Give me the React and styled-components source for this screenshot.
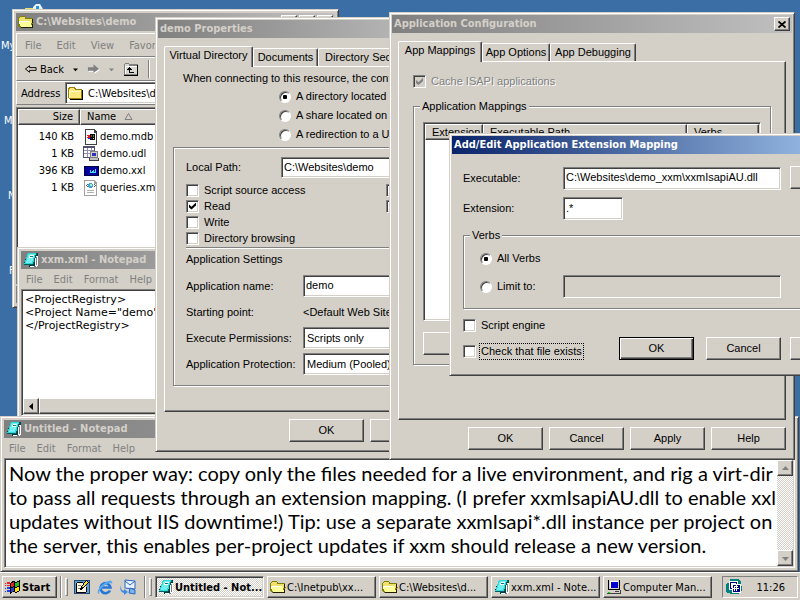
import React from "react";
import styled, { createGlobalStyle, css } from "styled-components";

const face = "#d4d0c8";
const ui = `"Liberation Sans", Arial, sans-serif`;
const tahoma = `"DejaVu Sans Condensed", "DejaVu Sans", sans-serif`;

const raised = css`
  border: 1px solid;
  border-color: #fff #404040 #404040 #fff;
  box-shadow: inset -1px -1px 0 #808080;
`;
const sunken = css`
  border: 1px solid;
  border-color: #808080 #fff #fff #808080;
  box-shadow: inset 1px 1px 0 #404040, inset -1px -1px 0 #d4d0c8;
`;
const etched = css`
  border: 1px solid #808080;
  box-shadow: 1px 1px 0 #fff, inset 1px 1px 0 #fff;
`;

const GlobalStyle = createGlobalStyle`
  *, *::before, *::after { box-sizing: border-box; }
  body { margin: 0; overflow: hidden; font: 11px/13px ${ui}; color: #000; background: #3a6ea5; }
  button, input, select, textarea { font: inherit; color: inherit; margin: 0; border-radius: 0; outline: none; }
`;

const Screen = styled.div`
  display: flex;
  flex-direction: column;
  height: 100vh;
`;
const Desktop = styled.main`
  position: relative;
  flex: 1;
  min-height: 0;
  overflow: hidden;
  background: #3a6ea5;
`;
const Shortcut = styled.span`
  position: absolute;
  left: ${(p) => p.$x}px;
  top: ${(p) => p.$y}px;
  color: #fff;
  font-family: ${tahoma};
`;

const Window = styled.section`
  position: absolute;
  left: ${(p) => p.$x}px;
  top: ${(p) => p.$y}px;
  width: ${(p) => p.$w};
  padding: ${(p) => (p.$sizable ? 3 : 2)}px;
  display: flex;
  flex-direction: column;
  background: ${face};
  border: 1px solid;
  border-color: #d4d0c8 #404040 #404040 #d4d0c8;
  box-shadow: inset 1px 1px 0 #fff, inset -1px -1px 0 #808080;
`;
const TitleBar = styled.header`
  display: flex;
  align-items: center;
  height: 18px;
  padding: 0 2px;
  gap: 2px;
  font: bold 11px/18px ${tahoma};
  white-space: nowrap;
  color: ${(p) => (p.$active ? "#fff" : face)};
  background: ${(p) =>
    p.$active
      ? "linear-gradient(90deg, #0a246a, #a6caf0)"
      : "linear-gradient(90deg, #808080, #c0c0c0)"};
`;
const TitleText = styled.span`
  flex: 1;
`;
const CaptionButton = styled.button`
  ${raised}
  display: grid;
  place-items: center;
  width: 16px;
  height: 14px;
  padding: 0;
  background: ${face};
`;
const MenuBar = styled.nav`
  display: flex;
  align-items: center;
  gap: ${(p) => p.$gap}px;
  height: ${(p) => p.$h}px;
  padding: 0 ${(p) => p.$pad}px;
`;
const MenuItem = styled.button`
  padding: 0;
  border: 0;
  background: none;
  color: #808080;
  font-family: ${tahoma};
`;
const Band = styled.div`
  display: flex;
  align-items: center;
  height: 24px;
  gap: ${(p) => p.$gap || 0}px;
  padding: 0 0 0 ${(p) => p.$pad || 0}px;
  border-top: 1px solid #fff;
  border-left: 1px solid #fff;
  border-bottom: 1px solid #808080;
  font-family: ${tahoma};
`;
const Bands = styled.div`
  display: flex;
  flex-direction: column;
  padding: 2px 0;
`;
const ToolButton = styled.button`
  display: flex;
  align-items: center;
  gap: 3px;
  padding: 0;
  border: 0;
  background: none;
`;
const Divider = styled.span`
  width: 2px;
  height: ${(p) => p.$h || 22}px;
  border-left: 1px solid #808080;
  border-right: 1px solid #fff;
`;
const AddressLabel = styled.label`
  width: 44px;
`;
const AddressBox = styled.div`
  ${sunken}
  flex: 1;
  display: flex;
  align-items: center;
  height: 22px;
  padding: 0 2px;
  gap: 4px;
  background: #fff;
`;
const AddressInput = styled.input`
  flex: 1;
  min-width: 0;
  padding: 0;
  border: 0;
  background: none;
`;
const FilePane = styled.div`
  ${sunken}
  height: 178px;
  padding: 1px;
  background: #fff;
`;
const FileTable = styled.table`
  width: 100%;
  border-collapse: separate;
  border-spacing: 0;
  table-layout: fixed;
  font-family: ${tahoma};
`;
const HeadCell = styled.th`
  ${raised}
  width: ${(p) => p.$w || "auto"};
  height: 16px;
  padding: 0 6px;
  background: ${face};
  font-weight: normal;
  text-align: ${(p) => (p.$right ? "right" : "left")};
  line-height: 14px;
`;
const SortMark = styled.svg`
  margin-left: 8px;
`;
const SpacerRow = styled.tr`
  height: 3px;
`;
const SizeCell = styled.td`
  height: 17px;
  padding: 0 6px 0 0;
  text-align: right;
`;
const NameCell = styled.td`
  padding: 0 0 0 3px;
`;
const FileName = styled.span`
  display: flex;
  align-items: center;
  gap: 1px;
  height: 17px;
`;
const StatusBar = styled.footer`
  height: 18px;
  margin-top: 1px;
  border: 1px solid;
  border-color: #808080 #fff #fff #808080;
`;

const EditorFrame = styled.div`
  ${sunken}
  display: grid;
  grid-template-columns: 1fr ${(p) => (p.$side ? "16px" : "")};
  padding: 1px;
  background: #fff;
`;
const Editor = styled.textarea`
  display: block;
  width: 100%;
  height: ${(p) => p.$h}px;
  padding: ${(p) => (p.$large ? "1px 0 0 3px" : "2px 0 0 2px")};
  border: 0;
  resize: none;
  overflow: hidden;
  white-space: pre;
  background: #fff;
  font: ${(p) =>
    p.$large ? `20px/24px Lato, "Open Sans", sans-serif` : `11px/13px "DejaVu Sans", sans-serif`};
`;
const checker = "repeating-conic-gradient(#fff 0 25%, #d4d0c8 0 50%) 0 0 / 2px 2px";
const ScrollTrack = styled.div`
  display: flex;
  flex-direction: ${(p) => (p.$across ? "row" : "column")};
  justify-content: space-between;
  background: ${checker};
`;
const ScrollButton = styled.button`
  ${raised}
  display: grid;
  place-items: center;
  width: 16px;
  height: 16px;
  padding: 0;
  background: ${face};
`;
const ScrollThumb = styled.div`
  ${raised}
  flex: 1;
  background: ${face};
`;

const DialogBody = styled.div`
  display: flex;
  flex-direction: column;
  padding: 8px 6px 7px;
`;
const TabStrip = styled.div`
  display: flex;
  align-items: flex-end;
  height: 20px;
`;
const Tab = styled.button`
  position: relative;
  height: 18px;
  width: ${(p) => p.$w}px;
  padding: 0;
  border: 1px solid;
  border-color: #fff #404040 transparent #fff;
  border-bottom: 0;
  border-radius: 2px 2px 0 0;
  box-shadow: inset -1px 0 0 #808080;
  background: ${face};
  white-space: nowrap;
  ${(p) =>
    p.$selected &&
    css`
      z-index: 1;
      height: 21px;
      margin-bottom: -1px;
      padding-bottom: 3px;
    `}
`;
const TabPane = styled.div`
  ${raised}
  display: flex;
  flex-direction: column;
  height: ${(p) => p.$h}px;
  padding: ${(p) => p.$pad};
`;
const ButtonRow = styled.div`
  display: flex;
  justify-content: flex-end;
  gap: ${(p) => p.$gap || 6}px;
  margin-top: ${(p) => p.$top || 0}px;
`;
const Button = styled.button`
  ${raised}
  width: ${(p) => p.$w || "75px"};
  height: 23px;
  padding: 0 0 1px;
  background: ${face};
  ${(p) =>
    p.$default &&
    css`
      border-color: #000;
      box-shadow: inset 1px 1px 0 #fff, inset -1px -1px 0 #404040, inset -2px -2px 0 #808080;
    `}
`;
const Field = styled.input`
  ${sunken}
  width: ${(p) => p.$w || "100%"};
  height: ${(p) => p.$h || 23}px;
  padding: 0 2px 2px;
  background: ${(p) => (p.disabled ? face : "#fff")};
`;
const DropDown = styled.select`
  ${sunken}
  appearance: none;
  width: 100%;
  height: 22px;
  padding: 0 3px;
  background: #fff;
`;
const Choice = styled.label`
  display: flex;
  align-items: center;
  gap: 5px;
  height: ${(p) => p.$h || 13}px;
  white-space: nowrap;
  ${(p) => p.$dim && css`color: #808080; text-shadow: 1px 1px 0 #fff;`}
`;
const FocusRing = styled.span`
  outline: 1px dotted #000;
  outline-offset: 1px;
`;
const Check = styled.input.attrs({ type: "checkbox" })`
  ${sunken}
  appearance: none;
  display: grid;
  place-items: center;
  flex: none;
  width: 13px;
  height: 13px;
  background: ${(p) => (p.disabled ? face : "#fff")};
  &:checked::before {
    content: "";
    width: 7px;
    height: 7px;
    background: ${(p) => (p.disabled ? "#808080" : "#000")};
    clip-path: polygon(0 28%, 36% 60%, 100% 0, 100% 42%, 36% 100%, 0 70%);
  }
`;
const Radio = styled.input.attrs({ type: "radio" })`
  appearance: none;
  display: grid;
  place-items: center;
  flex: none;
  width: 12px;
  height: 12px;
  border: 1px solid;
  border-color: #808080 #fff #fff #808080;
  border-radius: 50%;
  box-shadow: inset 1px 1px 0 #404040;
  background: #fff;
  &:checked::before {
    content: "";
    width: 4px;
    height: 4px;
    border-radius: 1px;
    background: #000;
  }
`;
const Group = styled.fieldset`
  ${etched}
  min-width: 0;
  margin: ${(p) => p.$margin};
  padding: ${(p) => p.$pad};
`;
const Legend = styled.legend`
  height: 13px;
  margin-left: ${(p) => p.$in || 0}px;
  padding: 0 2px;
  background: ${face};
`;
const Intro = styled.p`
  margin: 0 0 2px 10px;
  white-space: nowrap;
`;
const RadioList = styled.div`
  display: flex;
  flex-direction: column;
  margin-left: 106px;
`;
const SettingsBox = styled.div`
  ${etched}
  margin-top: 3px;
  padding: 9px 12px 8px;
`;
const FormRow = styled.div`
  display: grid;
  grid-template-columns: ${(p) => p.$cols};
  align-items: center;
  height: ${(p) => p.$h}px;
  white-space: nowrap;
`;
const CheckGrid = styled.div`
  display: grid;
  grid-template-columns: 200px 1fr;
  margin-top: 4px;
`;
const Rule = styled.hr`
  width: 100%;
  height: 2px;
  margin: 1px 0 0;
  border: 0;
  border-top: 1px solid #808080;
  border-bottom: 1px solid #fff;
`;
const SectionTitle = styled.h3`
  margin: 0 0 4px;
  font: 11px/20px ${ui};
`;
const MapList = styled.div`
  ${sunken}
  height: 199px;
  padding: 1px;
  background: #fff;
`;
const MapTable = styled(FileTable)`
  font-family: ${ui};
`;
const MappingBody = styled.div`
  display: flex;
  flex-direction: column;
  padding: 12px 11px 13px;
`;
const MappingRow = styled.div`
  display: grid;
  grid-template-columns: 100px 218px 57px;
  align-items: center;
  margin-bottom: 7px;
`;
const OuterButton = styled.div`
  padding-left: 9px;
`;
const VerbGrid = styled.div`
  display: grid;
  grid-template-columns: 83px 218px;
  align-items: center;
  row-gap: 10px;
`;
const VerbSpan = styled.div`
  grid-column: 1 / -1;
`;
const MappingFooter = styled.div`
  display: flex;
  align-items: flex-end;
  gap: 9px;
  margin-top: 10px;
`;
const FooterMain = styled.div`
  display: flex;
  justify-content: space-between;
  align-items: flex-end;
  width: 318px;
`;
const CheckStack = styled.div`
  display: flex;
  flex-direction: column;
  gap: 13px;
  padding-bottom: 2px;
`;

const Taskbar = styled.footer`
  display: flex;
  align-items: center;
  gap: 3px;
  height: 28px;
  padding: 2px 2px 0;
  background: ${face};
  box-shadow: inset 0 1px 0 #fff;
`;
const TaskButton = styled.button`
  ${raised}
  flex: 1;
  min-width: 0;
  display: flex;
  align-items: center;
  gap: 1px;
  height: 22px;
  padding: 0 2px;
  background: ${face};
  font-family: ${tahoma};
  white-space: nowrap;
  ${(p) =>
    p.$active &&
    css`
      ${sunken}
      background: ${checker};
      font-weight: bold;
    `}
`;
const StartButton = styled(TaskButton)`
  flex: none;
  width: 55px;
  font-weight: bold;
`;
const Grip = styled.span`
  width: 3px;
  height: 18px;
  border: 1px solid;
  border-color: #fff #808080 #808080 #fff;
`;
const QuickLaunch = styled.div`
  display: flex;
  gap: 7px;
  width: 70px;
  padding-left: 3px;
`;
const QuickButton = styled.button`
  padding: 0;
  border: 0;
  background: none;
  display: grid;
`;
const TaskList = styled.div`
  flex: 1;
  min-width: 0;
  display: flex;
  gap: 3px;
  padding-right: 7px;
`;
const Tray = styled.div`
  display: flex;
  align-items: center;
  justify-content: space-between;
  width: 76px;
  height: 22px;
  padding: 0 12px 0 3px;
  border: 1px solid;
  border-color: #808080 #fff #fff #808080;
  font-family: ${tahoma};
`;
const Svg = styled.svg.attrs({ viewBox: "0 0 16 16", shapeRendering: "crispEdges", "aria-hidden": true })`
  flex: none;
  display: block;
  width: 16px;
  height: 16px;
`;
const SmoothSvg = styled.svg.attrs({ viewBox: "0 0 16 16", "aria-hidden": true })`
  display: block;
  width: 16px;
  height: 16px;
`;

const OpenFolder = () => (
  <Svg>
    <path d="M0 4h1V3h1V2h5v1h1v1h7v4h1l-2 6H3L0 12z" fill="#808000" />
    <path d="M2 3h5v2h7v4H1V4z" fill="#f0e070" />
    <path d="M1 7h11v1h1l1 5H3L1 9z" fill="#ffff9c" />
    <path d="M1 7h10v1H2v2H1z" fill="#fff" />
    <path d="M3 13h11v-3h1v4H3zM14 5h1v4h-1z" fill="#202000" />
  </Svg>
);
const Folder = () => (
  <Svg>
    <path d="M0 3l1-1h5l2 2h6v10H1l-1-1z" fill="#a08000" />
    <path d="M1 4l1-1h4l1 2h6v8H1z" fill="#ffe880" />
    <path d="M1 6h12v1H2v6H1z" fill="#fff8c8" />
    <path d="M15 5v10H2v-1h12V5z" fill="#000" />
  </Svg>
);
const NotepadIcon = () => (
  <Svg>
    <path d="M5 1h10v11l-2 3H6v-2H1v-2z" fill="#004040" />
    <path d="M12 4h3v9l-2 2H7v-1h5z" fill="#fff" />
    <path d="M13 5v8M11 14h2" stroke="#808080" fill="none" />
    <path d="M5 1h8l-3 11H1z" fill="#30d8d8" />
    <path d="M6 2h6L9 11H3z" fill="#70f0f0" />
    <path d="M7 3h4l-1 3H6z" fill="#fff" />
    <path d="M7 4h3v1H7z" fill="#008080" />
    <path d="M1 12h9v1H1zM13 1h1l-3 11h-1z" fill="#006060" />
  </Svg>
);
const WinFlag = () => (
  <Svg>
    <path d="M5 4l3-2 3 1 4-2v11l-4 2-3-1-3 2z" fill="#000" />
    <path d="M6 4l3-1v4l-3 1z" fill="#f02020" />
    <path d="M10 4l4-1v4l-4 1z" fill="#20c020" />
    <path d="M6 9l3-1v4l-3 1z" fill="#2040e0" />
    <path d="M10 9l4-1v4l-4 1z" fill="#ffe000" />
    <path d="M0 4h1v1H0zM2 3h3v2H2zM0 6h1v1H0zM2 6h3v1H2z" fill="#f02020" />
    <path d="M0 9h1v1H0zM2 8h3v2H2zM0 12h1v1H0zM2 11h3v2H2z" fill="#2040e0" />
  </Svg>
);
const MdbIcon = () => (
  <Svg>
    <path d="M2 0h9l3 3v13H2z" fill="#404040" />
    <path d="M3 1h8v3h2v11H3z" fill="#fff" />
    <path d="M4 6h1v1H4zM4 8h1v1H4zM5 6h2v3H5z" fill="#e02020" />
    <path d="M7 5h5v6H7z" fill="#000" />
    <path d="M8 6h1v2H8z" fill="#e02020" />
    <path d="M10 6h1v2h-1z" fill="#20a020" />
    <path d="M5 9h2v1H5zM8 9h1v1H8z" fill="#2020e0" />
    <path d="M10 9h1v1h-1z" fill="#ffe000" />
  </Svg>
);
const UdlIcon = () => (
  <Svg>
    <path d="M0 0h12v12H0z" fill="#505070" />
    <path d="M1 2h10v9H1z" fill="#fff" />
    <path d="M1 4h10v1H1zM1 7h10v1H1zM4 2h1v9H4zM8 2h1v9H8z" fill="#9090a8" />
    <path d="M7 5h8v7H7z" fill="#808080" />
    <path d="M8 6h6v5H8z" fill="#d4d0c8" />
    <path d="M9 7h4v3H9z" fill="#3030c0" />
    <path d="M6 12h10v3H6z" fill="#404040" />
    <path d="M7 12h8v2H7z" fill="#c0c0c0" />
  </Svg>
);
const XxlIcon = () => (
  <Svg>
    <path d="M1 3h15v10H1z" fill="#000040" />
    <path d="M2 4h13v8H2z" fill="#0000a0" />
    <path d="M7 9h6v1H7zM7 7h1v2H7zM9 8h1v1H9zM10 7h1v2h-1zM12 6h1v4h-1z" fill="#40e0ff" />
  </Svg>
);
const XmlIcon = () => (
  <Svg>
    <path d="M1 0h10l3 3v13H1z" fill="#a0a0a0" />
    <path d="M2 1h9v3h2v11H2z" fill="#fff" />
    <path d="M3 5h1v1H3zM4 4h1v1H4zM4 6h1v1H4zM11 4h1v1h-1zM12 5h1v1h-1zM11 6h1v1h-1z" fill="#606060" />
    <path d="M6 3h3v1h1v3H9v1H6V7H5V4h1z" fill="#40a0e0" />
    <path d="M7 4h2v2H7z" fill="#a0ffc0" />
    <path d="M4 10h7v1H4zM4 12h7v1H4z" fill="#b0b0b0" />
  </Svg>
);
const ComputerIcon = () => (
  <Svg>
    <path d="M2 1h12v10H2z" fill="#000" />
    <path d="M3 1h10v9H3z" fill="#d4d0c8" />
    <path d="M4 2h8v7H4z" fill="#fff" />
    <path d="M5 3h7v6H5z" fill="#0000d0" />
    <path d="M1 11h14v4H1z" fill="#404040" />
    <path d="M1 11h13v3H1z" fill="#d4d0c8" />
    <path d="M9 12h4v1H9z" fill="#404040" />
    <path d="M2 13h2v1H2z" fill="#00e000" />
  </Svg>
);
const DesktopIcon = () => (
  <Svg>
    <path d="M0 1h16v14H0z" fill="#204870" />
    <path d="M1 2h14v12H1z" fill="#58a0d0" />
    <path d="M3 4h9v9H3z" fill="#fff8e0" />
    <path d="M2 4h1v9h9v1H2zM3 3h6v1H3zM12 8h1v5h-1z" fill="#000" />
    <path d="M12 1l3 2-6 7-3 1 1-3z" fill="#000" />
    <path d="M12 2l2 1-5 6-1-1z" fill="#ffd840" />
    <path d="M4 6h3v1H4zM4 9h2v1H4z" fill="#808080" />
  </Svg>
);
const BrowserIcon = () => (
  <SmoothSvg>
    <path d="M13 11.500A5 5 0 1 1 13.500 8.500H5" fill="none" stroke="#2878d8" strokeWidth="2.600" />
    <path d="M2 15c-4-2 2-10 9-13 3-1 5 0 4 3-1-2-4-1-7 1-4 3-6 6-6 9z" fill="#58a8f0" />
  </SmoothSvg>
);
const MailIcon = () => (
  <SmoothSvg>
    <path d="M5 1l10 1v8L5 9z" fill="#e8f2ff" stroke="#2868c0" />
    <path d="M5 2l5 4 5-4" fill="none" stroke="#2868c0" />
    <path d="M3 3C-1 5 0 11 4 12v-2l4 3-4 3v-2C-1 13-1 5 3 3z" fill="#3888e8" />
    <path d="M10 9l5 2v4l-6-1z" fill="#78b4f4" stroke="#2868c0" />
  </SmoothSvg>
);
const TrayIcon = () => (
  <Svg>
    <path d="M4 0h8l3 3 1 8-3 4H5l-5-2V5l4-2z" fill="#008080" />
    <path d="M3 2h9v9H3z" fill="#fff" />
    <path d="M4 3h7v7H4z" fill="#000080" />
    <path d="M6 5h9v9H6z" fill="#fff" />
    <path d="M7 6h7v7H7z" fill="#000080" />
    <path d="M5 4h5v1H5zM5 5h1v4H5zM8 7h4v1H8zM8 8h1v4H8zM10 6h1v6h-1zM7 9h6v1H7z" fill="#fff" />
  </Svg>
);
const UpFolder = () => (
  <Svg>
    <path d="M1 3h1V2h4v1h9v11H1z" fill="#808080" />
    <path d="M2 3h4v2h8v8H2z" fill="#d8d8d0" />
    <path d="M2 5h12v1H3v7H2z" fill="#fff" />
    <path d="M15 4v11H1v-1h13V4z" fill="#000" />
    <path d="M4 8h1V7h1V6h1v1h1v1h1v1H7v2h4v1H6V9H4z" fill="#000" />
  </Svg>
);
const Arrow = ({ forward }) => (
  <svg width="13" height="12" viewBox="0 0 14 12" aria-hidden="true">
    {forward ? (
      <>
        <path d="M2 5h6V2l6 5-6 4V9H2z" fill="#fff" />
        <path d="M1 4h6V1l6 5-6 4V8H1z" fill="#808080" />
      </>
    ) : (
      <path d="M6 2.500L1.500 6 6 9.500V7.500h7v-3H6z" fill="#d4d0c8" stroke="#000" />
    )}
  </svg>
);
const Triangle = ({ dir, color = "#000", size = 7 }) => {
  const d = {
    down: "M0 2h7L3.500 6z",
    up: "M0 5h7L3.500 1z",
    left: "M5 0v7L1 3.500z",
  }[dir];
  return (
    <svg width={size} height={size} viewBox="0 0 7 7" aria-hidden="true">
      <path d={d} fill={color} />
    </svg>
  );
};
const Cross = () => (
  <svg width="8" height="7" viewBox="0 0 8 7" aria-hidden="true">
    <path d="M0.500 0.500l7 6M7.500 0.500l-7 6" stroke="#000" strokeWidth="1.800" />
  </svg>
);
const DesktopFolder = styled.svg`
  position: absolute;
  left: 25px;
  top: 4px;
`;

const files = [
  ["140 KB", "demo.mdb", MdbIcon],
  ["1 KB", "demo.udl", UdlIcon],
  ["396 KB", "demo.xxl", XxlIcon],
  ["1 KB", "queries.xml", XmlIcon],
];

function Explorer() {
  return (
    <Window $x={12} $y={9} $w="327px" $sizable>
      <TitleBar>
        <OpenFolder />
        <TitleText>C:\Websites\demo</TitleText>
        <CaptionButton aria-label="Minimize" />
        <CaptionButton aria-label="Maximize" />
        <CaptionButton aria-label="Close" />
      </TitleBar>
      <Bands>
        <Band $pad={8} $gap={15}>
          {["File", "Edit", "View", "Favorites"].map((m) => <MenuItem key={m}>{m}</MenuItem>)}
        </Band>
        <Band $pad={7} $gap={9}>
          <ToolButton><Arrow />Back</ToolButton>
          <Triangle dir="down" size={5} />
          <ToolButton aria-label="Forward"><Arrow forward /></ToolButton>
          <Triangle dir="down" size={5} color="#808080" />
          <ToolButton aria-label="Up"><UpFolder /></ToolButton>
          <Divider $h={18} />
        </Band>
        <Band $pad={4}>
          <AddressLabel htmlFor="address">Address</AddressLabel>
          <AddressBox>
            <Folder />
            <AddressInput id="address" defaultValue="C:\Websites\demo" />
          </AddressBox>
        </Band>
      </Bands>
      <FilePane>
        <FileTable>
          <thead>
            <tr>
              <HeadCell $w="62px" $right>Size</HeadCell>
              <HeadCell>
                Name
                <SortMark width="9" height="7" viewBox="0 0 9 7">
                  <path d="M4.500 0.500L1 6.500h7z" fill="none" stroke="#808080" />
                </SortMark>
              </HeadCell>
            </tr>
          </thead>
          <tbody>
            <SpacerRow />
            {files.map(([size, name, Icon]) => (
              <tr key={name}>
                <SizeCell>{size}</SizeCell>
                <NameCell><FileName><Icon />{name}</FileName></NameCell>
              </tr>
            ))}
          </tbody>
        </FileTable>
      </FilePane>
      <StatusBar />
    </Window>
  );
}

function NotepadMenu() {
  return (
    <MenuBar $h={20} $gap={11} $pad={5}>
      {["File", "Edit", "Format", "Help"].map((m) => <MenuItem key={m}>{m}</MenuItem>)}
    </MenuBar>
  );
}

function RegistryNotepad() {
  return (
    <Window $x={17} $y={247} $w="320px" $sizable>
      <TitleBar>
        <NotepadIcon />
        <TitleText>xxm.xml - Notepad</TitleText>
      </TitleBar>
      <NotepadMenu />
      <EditorFrame>
        <Editor
          $h={107}
          aria-label="xxm.xml"
          spellCheck={false}
          defaultValue={'<ProjectRegistry>\n<Project Name="demo">\n</ProjectRegistry>'}
        />
        <ScrollTrack $across>
          <ScrollButton aria-label="Scroll left"><Triangle dir="left" /></ScrollButton>
          <ScrollThumb />
        </ScrollTrack>
      </EditorFrame>
    </Window>
  );
}

const note = [
  "Now the proper way: copy only the files needed for a live environment, and rig a virt-dir",
  "to pass all requests through an extension mapping. (I prefer xxmIsapiAU.dll to enable xxl",
  "updates without IIS downtime!) Tip: use a separate xxmIsapi*.dll instance per project on",
  "the server, this enables per-project updates if xxm should release a new version.",
].join("\n");

function NoteNotepad() {
  return (
    <Window $x={0} $y={416} $w="calc(100% - 1px)" $sizable>
      <TitleBar>
        <NotepadIcon />
        <TitleText>Untitled - Notepad</TitleText>
      </TitleBar>
      <NotepadMenu />
      <EditorFrame $side>
        <Editor $h={106} $large aria-label="Untitled" spellCheck={false} defaultValue={note} />
        <ScrollTrack>
          <ScrollButton aria-label="Scroll up"><Triangle dir="up" color="#808080" /></ScrollButton>
          <ScrollButton aria-label="Scroll down"><Triangle dir="down" color="#808080" /></ScrollButton>
        </ScrollTrack>
      </EditorFrame>
    </Window>
  );
}

function PropertiesDialog() {
  return (
    <Window $x={155} $y={17} $w="299px">
      <TitleBar><TitleText>demo Properties</TitleText></TitleBar>
      <DialogBody>
        <TabStrip role="tablist">
          <Tab role="tab" aria-selected="true" $selected $w={89}>Virtual Directory</Tab>
          <Tab role="tab" $w={65}>Documents</Tab>
          <Tab role="tab" $w={101}>Directory Security</Tab>
        </TabStrip>
        <TabPane $h={346} $pad="5px 8px">
          <Intro>When connecting to this resource, the content</Intro>
          <RadioList>
            <Choice $h={19}><Radio name="source" defaultChecked />A directory located on</Choice>
            <Choice $h={19}><Radio name="source" />A share located on</Choice>
            <Choice $h={19}><Radio name="source" />A redirection to a URL</Choice>
          </RadioList>
          <SettingsBox>
            <FormRow $cols="95px 1fr" $h={21}>
              <label htmlFor="path">Local Path:</label>
              <Field id="path" $h={21} defaultValue="C:\Websites\demo" />
            </FormRow>
            <CheckGrid>
              <Choice $h={16}><Check />Script source access</Choice>
              <Choice $h={16}><Check aria-label="Log visits" /></Choice>
              <Choice $h={16}><Check defaultChecked />Read</Choice>
              <Choice $h={16}><Check aria-label="Index this resource" /></Choice>
              <Choice $h={16}><Check />Write</Choice>
              <span />
              <Choice $h={16}><Check />Directory browsing</Choice>
            </CheckGrid>
            <Rule />
            <SectionTitle>Application Settings</SectionTitle>
            <FormRow $cols="117px 1fr" $h={26}>
              <label htmlFor="appname">Application name:</label>
              <Field id="appname" $h={22} defaultValue="demo" />
            </FormRow>
            <FormRow $cols="117px 1fr" $h={26}>
              <span>Starting point:</span>
              <span>&lt;Default Web Site&gt;</span>
            </FormRow>
            <FormRow $cols="117px 1fr" $h={26}>
              <label htmlFor="exec">Execute Permissions:</label>
              <DropDown id="exec"><option>Scripts only</option></DropDown>
            </FormRow>
            <FormRow $cols="117px 1fr" $h={26}>
              <label htmlFor="prot">Application Protection:</label>
              <DropDown id="prot"><option>Medium (Pooled)</option></DropDown>
            </FormRow>
          </SettingsBox>
        </TabPane>
        <ButtonRow $top={7}>
          <Button>OK</Button>
          <Button>Cancel</Button>
        </ButtonRow>
      </DialogBody>
    </Window>
  );
}

function ConfigurationDialog() {
  return (
    <Window $x={389} $y={12} $w="406px">
      <TitleBar>
        <TitleText>Application Configuration</TitleText>
        <CaptionButton aria-label="Close"><Cross /></CaptionButton>
      </TitleBar>
      <DialogBody>
        <TabStrip role="tablist">
          <Tab role="tab" aria-selected="true" $selected $w={84}>App Mappings</Tab>
          <Tab role="tab" $w={68}>App Options</Tab>
          <Tab role="tab" $w={86}>App Debugging</Tab>
        </TabStrip>
        <TabPane $h={359} $pad="13px 14px 0">
          <Choice $dim><Check disabled defaultChecked />Cache ISAPI applications</Choice>
          <Group $margin="12px 0 0" $pad="9px">
            <Legend $in={-3}>Application Mappings</Legend>
            <MapList>
              <MapTable>
                <thead>
                  <tr>
                    <HeadCell $w="58px">Extension</HeadCell>
                    <HeadCell $w="204px">Executable Path</HeadCell>
                    <HeadCell>Verbs</HeadCell>
                  </tr>
                </thead>
              </MapTable>
            </MapList>
            <ButtonRow $top={11}>
              <Button $w="100%" aria-label="Add" />
            </ButtonRow>
          </Group>
        </TabPane>
        <ButtonRow $top={7}>
          <Button>OK</Button>
          <Button>Cancel</Button>
          <Button>Apply</Button>
          <Button>Help</Button>
        </ButtonRow>
      </DialogBody>
    </Window>
  );
}

function MappingDialog() {
  return (
    <Window $x={449} $y={133} $w="412px">
      <TitleBar $active><TitleText>Add/Edit Application Extension Mapping</TitleText></TitleBar>
      <MappingBody>
        <MappingRow>
          <label htmlFor="exe">Executable:</label>
          <Field id="exe" defaultValue="C:\Websites\demo_xxm\xxmIsapiAU.dll" />
          <OuterButton><Button aria-label="Browse" /></OuterButton>
        </MappingRow>
        <MappingRow>
          <label htmlFor="ext">Extension:</label>
          <Field id="ext" $w="60px" defaultValue=".*" />
        </MappingRow>
        <Group $margin="2px 0 0" $pad="10px 16px">
          <Legend $in={-10}>Verbs</Legend>
          <VerbGrid>
            <VerbSpan><Choice><Radio name="verbs" defaultChecked />All Verbs</Choice></VerbSpan>
            <Choice><Radio name="verbs" />Limit to:</Choice>
            <Field disabled aria-label="Limit to" />
          </VerbGrid>
        </Group>
        <MappingFooter>
          <FooterMain>
            <CheckStack>
              <Choice><Check />Script engine</Choice>
              <Choice><Check /><FocusRing>Check that file exists</FocusRing></Choice>
            </CheckStack>
            <ButtonRow $gap={12}>
              <Button $default>OK</Button>
              <Button>Cancel</Button>
            </ButtonRow>
          </FooterMain>
          <Button $w="57px" aria-label="Help" />
        </MappingFooter>
      </MappingBody>
    </Window>
  );
}

const tasks = [
  ["Untitled - Not...", NotepadIcon, true],
  ["C:\\Inetpub\\xx...", OpenFolder],
  ["C:\\Websites\\d...", OpenFolder],
  ["xxm.xml - Note...", NotepadIcon],
  ["Computer Man...", ComputerIcon],
];

export default function App() {
  return (
    <Screen>
      <GlobalStyle />
      <Desktop>
        <DesktopFolder width="18" height="6" viewBox="0 0 18 6" aria-hidden="true">
          <path d="M0 4h8v2H0z" fill="#f0e060" />
          <path d="M8 3l3-3h4l3 5v1H8z" fill="#e8f4ff" />
          <path d="M11 2h3v4h-3z" fill="#3090e0" />
        </DesktopFolder>
        <Shortcut $x={1} $y={39}>My</Shortcut>
        <Shortcut $x={4} $y={114}>M</Shortcut>
        <Shortcut $x={8} $y={189}>N</Shortcut>
        <Shortcut $x={9} $y={264}>F</Shortcut>
        <Explorer />
        <RegistryNotepad />
        <NoteNotepad />
        <PropertiesDialog />
        <ConfigurationDialog />
        <MappingDialog />
      </Desktop>
      <Taskbar>
        <StartButton><WinFlag />Start</StartButton>
        <Divider />
        <Grip />
        <QuickLaunch>
          <QuickButton aria-label="Show desktop"><DesktopIcon /></QuickButton>
          <QuickButton aria-label="Internet browser"><BrowserIcon /></QuickButton>
          <QuickButton aria-label="Mail"><MailIcon /></QuickButton>
        </QuickLaunch>
        <Divider />
        <Grip />
        <TaskList>
          {tasks.map(([label, Icon, active]) => (
            <TaskButton key={label} $active={active}><Icon />{label}</TaskButton>
          ))}
        </TaskList>
        <Tray><TrayIcon /><time>11:26</time></Tray>
      </Taskbar>
    </Screen>
  );
}
